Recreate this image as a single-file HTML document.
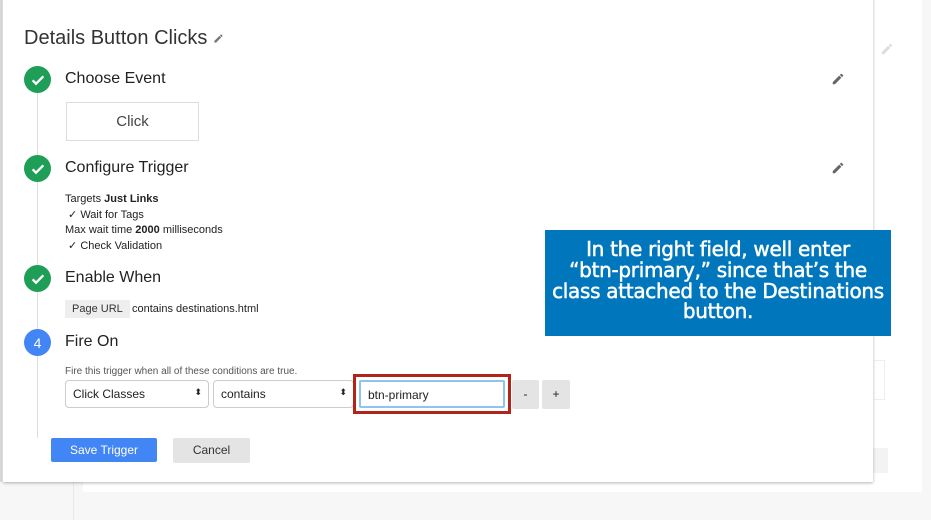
<!DOCTYPE html>
<html><head><style>
body{margin:0;width:931px;height:520px;background:#f7f7f7;font-family:"Liberation Sans",sans-serif;position:relative;overflow:hidden;color:#222}
.abs{position:absolute}
.card{left:3px;top:-2px;width:870px;height:484px;background:#fff;box-shadow:0 1px 3px rgba(0,0,0,.3)}
.circ{width:27px;height:27px;border-radius:50%;background:#1e9e57;display:flex;align-items:center;justify-content:center}
.h{font-size:16px;color:#222}
.sm{font-size:11px;color:#222}
.sel{height:28px;border:1px solid #ccc;border-radius:4px;background:#fff;font-size:12px;box-sizing:border-box;padding:6px 7px}
.btn{background:#e4e4e4;border-radius:2px;font-size:12px;text-align:center}
</style></head><body>
<div class="abs" style="left:873px;top:0;width:49px;height:492px;background:#fff"></div>
<div class="abs" style="left:83px;top:482px;width:839px;height:10px;background:#fff"></div>
<div class="abs" style="left:73px;top:482px;width:1px;height:38px;background:#e8e8e8"></div>
<div class="abs" style="left:0;top:0;width:2px;height:482px;background:#ddd"></div>
<svg class="abs" style="left:880px;top:42px" width="14" height="14" viewBox="0 0 24 24"><path d="M3 17.25V21h3.75L17.8 9.94l-3.75-3.75L3 17.25zM20.7 7.04a1 1 0 000-1.41l-2.34-2.34a1 1 0 00-1.41 0l-1.83 1.83 3.75 3.75 1.83-1.830z" fill="#ddd"/></svg>
<div class="abs" style="left:874px;top:360px;width:10px;height:38px;border:1px solid #eee;border-left:none"></div>
<div class="abs" style="left:873px;top:448px;width:15px;height:25px;background:#f3f3f3"></div>
<div class="abs card"></div>
<div class="abs" style="left:24px;top:27px;font-size:20px;color:#333">Details Button Clicks <svg width="11" height="11" viewBox="0 0 24 24"><path d="M3 17.25V21h3.75L17.8 9.94l-3.75-3.75L3 17.25zM20.7 7.04a1 1 0 000-1.41l-2.34-2.34a1 1 0 00-1.41 0l-1.83 1.83 3.75 3.75 1.83-1.83z" fill="#777"/></svg></div>
<div class="abs" style="left:37px;top:80px;width:1px;height:358px;background:#ddd"></div>
<div class="abs circ" style="left:24px;top:66px"><svg width="16" height="16" viewBox="0 0 24 24"><path d="M4 12.5l5 5L20 6.5" stroke="#fff" stroke-width="3.5" fill="none"/></svg></div>
<div class="abs h" style="left:65px;top:70px">Choose Event</div>
<div class="abs" style="left:66px;top:102px;width:133px;height:39px;border:1px solid #ddd;box-sizing:border-box;text-align:center;line-height:37px;font-size:15px;color:#444">Click</div>
<div class="abs circ" style="left:24px;top:155px"><svg width="16" height="16" viewBox="0 0 24 24"><path d="M4 12.5l5 5L20 6.5" stroke="#fff" stroke-width="3.5" fill="none"/></svg></div>
<div class="abs h" style="left:65px;top:159px">Configure Trigger</div>
<div class="abs sm" style="left:65px;top:192px;line-height:15.5px">Targets <b>Just Links</b><br>&nbsp;✓ Wait for Tags<br>Max wait time <b>2000</b> milliseconds<br>&nbsp;✓ Check Validation</div>
<div class="abs circ" style="left:24px;top:265px"><svg width="16" height="16" viewBox="0 0 24 24"><path d="M4 12.5l5 5L20 6.5" stroke="#fff" stroke-width="3.5" fill="none"/></svg></div>
<div class="abs h" style="left:65px;top:269px">Enable When</div>
<div class="abs sm" style="left:65px;top:300px;background:#eee;padding:3px 7px;color:#333">Page URL</div>
<div class="abs sm" style="left:132px;top:303px">contains destinations.html</div>
<div class="abs circ" style="left:24px;top:329px;background:#4285f4;color:#fff;font-size:14px">4</div>
<div class="abs h" style="left:65px;top:333px">Fire On</div>
<div class="abs" style="left:65px;top:366px;font-size:10px;color:#555">Fire this trigger when all of these conditions are true.</div>
<div class="abs sel" style="left:65px;top:380px;width:144px">Click Classes<span style="position:absolute;right:6px;top:6px;font-size:9px">⬍</span></div>
<div class="abs sel" style="left:213px;top:380px;width:141px">contains<span style="position:absolute;right:6px;top:6px;font-size:9px">⬍</span></div>
<div class="abs" style="left:353px;top:374px;width:158px;height:40px;border:3px solid #b02419;box-sizing:border-box"></div>
<div class="abs sel" style="left:359px;top:380px;width:146px;border:2px solid #8fc3f0;border-radius:2px">btn-primary</div>
<div class="abs btn" style="left:512px;top:380px;width:27px;height:29px;line-height:29px">-</div>
<div class="abs btn" style="left:542px;top:380px;width:28px;height:29px;line-height:29px">+</div>
<div class="abs" style="left:51px;top:438px;width:106px;height:24px;background:#4285f4;color:#fff;font-size:12px;text-align:center;line-height:24px;border-radius:2px">Save Trigger</div>
<div class="abs btn" style="left:173px;top:438px;width:77px;height:25px;line-height:25px;color:#333">Cancel</div>
<svg class="abs" style="left:831px;top:72px" width="14" height="14" viewBox="0 0 24 24"><path d="M3 17.25V21h3.75L17.8 9.94l-3.75-3.75L3 17.25zM20.7 7.04a1 1 0 000-1.41l-2.34-2.34a1 1 0 00-1.41 0l-1.83 1.83 3.75 3.75 1.83-1.83z" fill="#666"/></svg>
<svg class="abs" style="left:831px;top:161px" width="14" height="14" viewBox="0 0 24 24"><path d="M3 17.25V21h3.75L17.8 9.94l-3.75-3.75L3 17.25zM20.7 7.04a1 1 0 000-1.41l-2.34-2.34a1 1 0 00-1.41 0l-1.83 1.83 3.75 3.75 1.83-1.83z" fill="#666"/></svg>
<div class="abs" style="left:545px;top:230px;width:346px;height:106px;background:#0077bd;color:#fff;font-family:'DejaVu Sans',sans-serif;font-size:20px;line-height:20.8px;text-align:center;padding-top:9px;box-sizing:border-box;letter-spacing:-0.3px;-webkit-text-stroke:0.5px #fff;white-space:nowrap">In the right field, well enter<br>“btn-primary,” since that’s the<br>class attached to the Destinations<br>button.</div>
</body></html>
